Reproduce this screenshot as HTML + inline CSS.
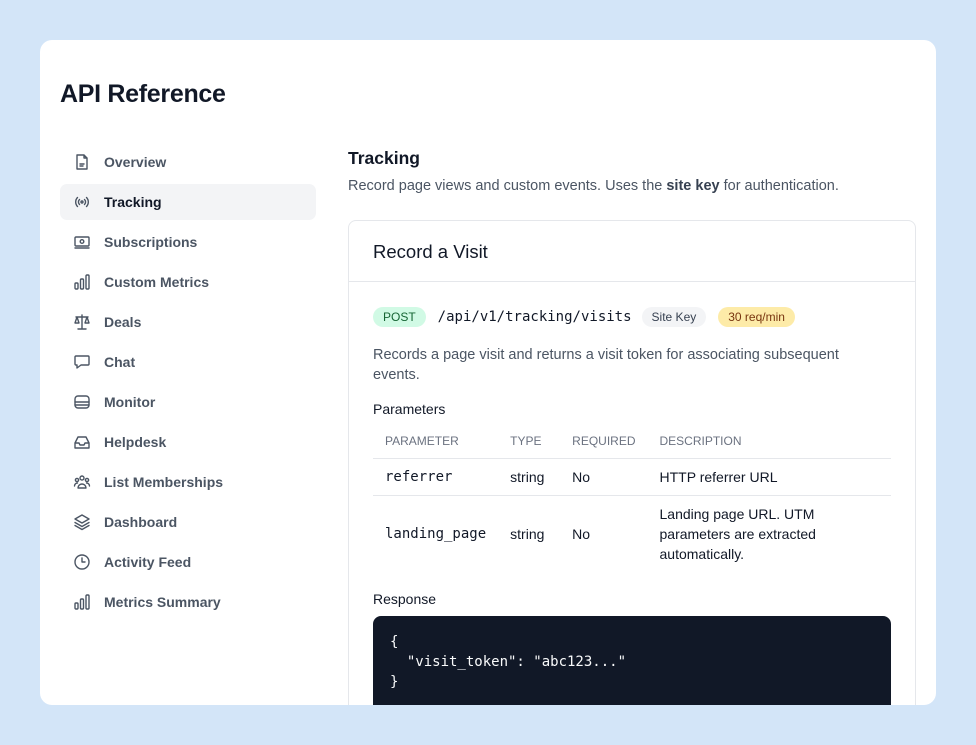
<!DOCTYPE html>
<html><head><style>
*{box-sizing:border-box;margin:0;padding:0}
body{width:976px;height:745px;background:#d3e5f8;font-family:"Liberation Sans",sans-serif;position:relative;overflow:hidden;color:#111827}
.panel{position:absolute;left:40px;top:40px;width:896px;height:665px;background:#fff;border-radius:12px;overflow:hidden}
h1{position:absolute;left:20px;top:40px;font-size:25px;font-weight:700;color:#111827;letter-spacing:-0.3px}
.nav{position:absolute;left:20px;top:104px;width:256px}
.it{height:36px;margin-bottom:4px;display:flex;align-items:center;padding-left:13px;font-size:14px;font-weight:600;color:#4b5563;border-radius:7px}
.it.a{background:#f3f4f6;color:#111827}
.it svg{width:18px;height:18px;margin-right:13px;stroke:#4b5563;fill:none;stroke-width:1.4;stroke-linecap:round;stroke-linejoin:round}
.main{position:absolute;left:308px;top:0}
.t{position:absolute;top:108px;left:0;font-size:17.5px;font-weight:700;white-space:nowrap}
.d{position:absolute;top:138px;left:0;font-size:14.5px;color:#4b5563;white-space:nowrap}
.card{position:absolute;left:0;top:180px;width:568px;height:520px;border:1px solid #e5e7eb;border-radius:8px}
.ch{height:61px;border-bottom:1px solid #e5e7eb;padding:20px 24px;font-size:18.5px;font-weight:500}
.b{position:absolute;left:24px}
.pill{display:inline-block;height:20px;line-height:20px;border-radius:10px;font-size:12px;padding:0 10px;vertical-align:middle}
.mono{font-family:"DejaVu Sans Mono","Liberation Mono",monospace}
table{border-collapse:collapse;width:518px;font-size:14px}
th{font-size:12px;font-weight:500;color:#6b7280;text-align:left;padding:0 12px;height:34px;border-bottom:1px solid #e5e7eb}
td{padding:0 12px;color:#111827}
tr.r1 td{border-bottom:1px solid #e5e7eb}
pre{background:#111827;color:#f9fafb;border-radius:8px;width:518px;height:100px;padding:16px 17px;font-size:14px;line-height:20px}
</style></head><body>
<div class="panel">
<h1>API Reference</h1>
<div class="nav">
<div class="it"><svg viewBox="0 0 18 18"><path d="M4 2h7l3 3v11H4z M11 2v3h3 M7 11h4 M7 13h3"/></svg>Overview</div>
<div class="it a"><svg viewBox="0 0 18 18"><circle cx="9" cy="9" r="1"/><path d="M6.5 6.5a3.5 3.5 0 000 5M11.5 6.5a3.5 3.5 0 010 5M4.5 4.5a6.5 6.5 0 000 9M13.5 4.5a6.5 6.5 0 010 9"/></svg>Tracking</div>
<div class="it"><svg viewBox="0 0 18 18"><rect x="2" y="4" width="14" height="9" rx="1"/><circle cx="9" cy="8.5" r="1.8"/><path d="M2 15h14"/></svg>Subscriptions</div>
<div class="it"><svg viewBox="0 0 18 18"><rect x="2" y="10" width="3" height="6" rx="1"/><rect x="7.5" y="6" width="3" height="10" rx="1"/><rect x="13" y="2" width="3" height="14" rx="1"/></svg>Custom Metrics</div>
<div class="it"><svg viewBox="0 0 18 18"><path d="M9 2v14M5 16h8M3 4h12M4 4l-2 6h4zM14 4l-2 6h4z"/></svg>Deals</div>
<div class="it"><svg viewBox="0 0 18 18"><path d="M3 3h12a1 1 0 011 1v7a1 1 0 01-1 1H8l-4 3v-3H3a1 1 0 01-1-1V4a1 1 0 011-1z"/></svg>Chat</div>
<div class="it"><svg viewBox="0 0 18 18"><rect x="2" y="3" width="14" height="12" rx="3"/><path d="M2 9h14M2 12h14"/></svg>Monitor</div>
<div class="it"><svg viewBox="0 0 18 18"><path d="M2 10l3-6h8l3 6v5H2zM2 10h4l1 2h4l1-2h4"/></svg>Helpdesk</div>
<div class="it"><svg viewBox="0 0 18 18"><circle cx="9" cy="5" r="2"/><circle cx="4" cy="7" r="1.6"/><circle cx="14" cy="7" r="1.6"/><path d="M5 15a4 4 0 018 0zM1.5 13a3 3 0 013-3M16.5 13a3 3 0 00-3-3"/></svg>List Memberships</div>
<div class="it"><svg viewBox="0 0 18 18"><path d="M9 2l7 4-7 4-7-4zM2 9.5l7 4 7-4M2 12.5l7 4 7-4"/></svg>Dashboard</div>
<div class="it"><svg viewBox="0 0 18 18"><circle cx="9" cy="9" r="7"/><path d="M9 5v4h3"/></svg>Activity Feed</div>
<div class="it"><svg viewBox="0 0 18 18"><rect x="2" y="10" width="3" height="6" rx="1"/><rect x="7.5" y="6" width="3" height="10" rx="1"/><rect x="13" y="2" width="3" height="14" rx="1"/></svg>Metrics Summary</div>
</div>
<div class="main">
<div class="t">Tracking</div>
<div class="d">Record page views and custom events. Uses the <b style="color:#374151">site key</b> for authentication.</div>
<div class="card">
<div class="ch">Record a Visit</div>
<div class="b" style="top:86px;white-space:nowrap"><span class="pill" style="background:#d1fae5;color:#166534">POST</span><span class="mono" style="font-size:14px;margin:0 10px 0 12px;vertical-align:middle">/api/v1/tracking/visits</span><span class="pill" style="background:#f3f4f6;color:#374151">Site Key</span><span class="pill" style="background:#fdeba8;color:#78350f;margin-left:12px">30 req/min</span></div>
<div class="b" style="top:124px;width:470px;font-size:14.5px;line-height:20px;color:#4b5563">Records a page visit and returns a visit token for associating subsequent events.</div>
<div class="b" style="top:180px;font-size:14px;font-weight:500">Parameters</div>
<div class="b" style="top:203px"><table>
<tr><th style="width:125px">PARAMETER</th><th style="width:62px">TYPE</th><th style="width:84px">REQUIRED</th><th>DESCRIPTION</th></tr>
<tr class="r1" style="height:37px"><td class="mono">referrer</td><td>string</td><td>No</td><td>HTTP referrer URL</td></tr>
<tr style="height:77px"><td class="mono">landing_page</td><td>string</td><td>No</td><td style="line-height:20px">Landing page URL. UTM parameters are extracted automatically.</td></tr>
</table></div>
<div class="b" style="top:370px;font-size:14px;font-weight:500">Response</div>
<div class="b" style="top:395px"><pre class="mono">{
  "visit_token": "abc123..."
}</pre></div>
</div>
</div>
</div>
</body></html>
